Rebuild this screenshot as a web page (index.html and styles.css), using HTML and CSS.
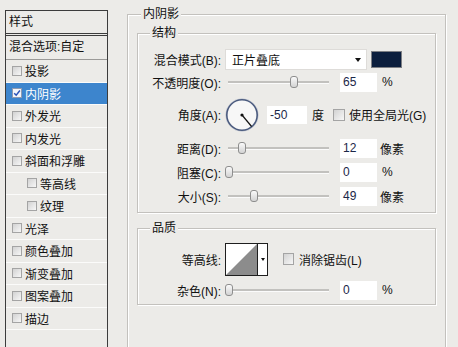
FILE: index.html
```html
<!DOCTYPE html>
<html lang="zh-CN">
<head>
<meta charset="utf-8">
<title>图层样式 - 内阴影</title>
<link rel="stylesheet" href="styles.css">
</head>
<body>
<div class="dialog">
  <div class="styles-list">
    <div class="list-head">样式</div>
    <div class="list-blend">混合选项:自定</div>
    <div class="list-item"><span class="cb"></span>投影</div>
    <div class="list-item selected"><span class="cb checked"><svg viewBox="0 0 10 10" width="8" height="8"><path d="M1.5 5.2 L4 7.8 L8.6 1.8" fill="none" stroke="#2a52b8" stroke-width="1.8"/></svg></span>内阴影</div>
    <div class="list-item"><span class="cb"></span>外发光</div>
    <div class="list-item"><span class="cb"></span>内发光</div>
    <div class="list-item"><span class="cb"></span>斜面和浮雕</div>
    <div class="list-item sub"><span class="cb"></span>等高线</div>
    <div class="list-item sub"><span class="cb"></span>纹理</div>
    <div class="list-item"><span class="cb"></span>光泽</div>
    <div class="list-item"><span class="cb"></span>颜色叠加</div>
    <div class="list-item"><span class="cb"></span>渐变叠加</div>
    <div class="list-item"><span class="cb"></span>图案叠加</div>
    <div class="list-item"><span class="cb"></span>描边</div>
  </div>

  <fieldset class="group outer">
    <legend class="legend-outer">内阴影</legend>

    <fieldset class="group structure">
      <legend class="legend-inner">结构</legend>

      <div class="row row-select">
        <span class="lbl">混合模式(B):</span>
        <div class="select"><span>正片叠底</span><span class="arrow"></span></div>
        <span class="swatch"></span>
      </div>

      <div class="row row-22">
        <span class="lbl">不透明度(O):</span>
        <div class="slider"><span class="thumb" style="margin-left:65px"></span></div>
        <div class="num">65</div>
        <span class="unit pct">%</span>
      </div>

      <div class="row row-dial">
        <span class="lbl">角度(A):</span>
        <svg class="dial" viewBox="0 0 34 36" width="34" height="36">
          <circle cx="17" cy="18" r="16.3" fill="none" stroke="#c9cdd6" stroke-width="1"/>
          <circle cx="17" cy="18" r="15.2" fill="#f7f7f7" stroke="#4a5a7e" stroke-width="1.6"/>
          <line x1="17" y1="18" x2="26.6" y2="29.5" stroke="#111" stroke-width="1.2"/>
          <circle cx="17" cy="18" r="1.6" fill="#111"/>
        </svg>
        <div class="num num-angle">-50</div>
        <span class="unit deg">度</span>
        <span class="cb cb-big cb-global"></span>
        <span class="cb-label">使用全局光(G)</span>
      </div>

      <div class="row">
        <span class="lbl">距离(D):</span>
        <div class="slider"><span class="thumb" style="margin-left:13px"></span></div>
        <div class="num">12</div>
        <span class="unit px">像素</span>
      </div>

      <div class="row">
        <span class="lbl">阻塞(C):</span>
        <div class="slider"><span class="thumb" style="margin-left:0px"></span></div>
        <div class="num">0</div>
        <span class="unit pct">%</span>
      </div>

      <div class="row">
        <span class="lbl">大小(S):</span>
        <div class="slider"><span class="thumb" style="margin-left:25px"></span></div>
        <div class="num">49</div>
        <span class="unit px">像素</span>
      </div>
    </fieldset>

    <fieldset class="group quality">
      <legend class="legend-inner">品质</legend>

      <div class="row row-contour">
        <span class="lbl">等高线:</span>
        <div class="contour">
          <svg class="curve" viewBox="0 0 31 31" width="31" height="31">
            <rect x="0" y="0" width="31" height="31" fill="#fff"/>
            <polygon points="0,31 31,0 31,31" fill="#8c8c8c"/>
          </svg>
          <span class="drop"><span class="arrow small"></span></span>
        </div>
        <span class="cb cb-big cb-aa"></span>
        <span class="cb-label">消除锯齿(L)</span>
      </div>

      <div class="row row-22 row-noise">
        <span class="lbl">杂色(N):</span>
        <div class="slider"><span class="thumb" style="margin-left:0px"></span></div>
        <div class="num">0</div>
        <span class="unit pct">%</span>
      </div>
    </fieldset>
  </fieldset>
</div>
</body>
</html>
```

FILE: styles.css
```css
html, body {
  margin: 0;
  padding: 0;
  background: #ecebe8;
  overflow: hidden;
}

body {
  font-family: "Liberation Sans", "Noto Sans CJK SC", sans-serif;
  font-size: 12px;
  color: #111;
  width: 458px;
  height: 347px;
}

.dialog {
  display: flex;
  align-items: flex-start;
  height: 347px;
  overflow: hidden;
}

/* ---------- left style list ---------- */
.styles-list {
  box-sizing: border-box;
  width: 103px;
  height: 337px;
  margin: 10px 0 0 5px;
  border: 1px solid #3c3c3c;
  border-bottom: none;
  background: #ecebe8;
  flex: none;
}

.list-head {
  height: 22px;
  line-height: 22px;
  padding-left: 3px;
  border-bottom: 3px double #3c3c3c;
}

.list-blend {
  height: 23px;
  line-height: 23px;
  padding-left: 3px;
  border-bottom: 1px solid #9b9a98;
}

.list-item {
  height: 21.5px;
  display: flex;
  align-items: center;
  padding-left: 6px;
  border-bottom: 1px solid #fbfbfa;
}

.list-item.sub {
  padding-left: 21px;
}

.list-item.selected {
  background: #3d85cd;
  color: #fff;
}

.cb {
  box-sizing: border-box;
  width: 10px;
  height: 10px;
  border: 1px solid #a4a4a4;
  background: linear-gradient(135deg, #d2d2d2, #f7f7f7);
  margin-right: 3px;
  flex: none;
  display: flex;
  align-items: center;
  justify-content: center;
}

.cb.checked {
  background: #f4f6fa;
  border-color: #8f9ab0;
}

.cb-big {
  width: 12px;
  height: 12px;
}

/* ---------- group boxes ---------- */
.group {
  margin: 0;
  border: 1px solid #c3c1bd;
  box-shadow: inset 1px 1px 0 #fff, 1px 1px 0 #fff;
  min-width: 0;
}

.outer {
  box-sizing: border-box;
  width: 319px;
  height: 341px;
  margin: 6px 0 0 19px;
  padding: 3px 9px 0;
  border-bottom: none;
  flex: none;
}

.group legend {
  line-height: 16px;
  padding: 0 2px;
  background: #ecebe8;
}

.legend-outer {
  margin-left: 4px;
}

.legend-inner {
  margin-left: 12px;
}

.structure {
  padding: 7px 0 4px;
}

.quality {
  margin-top: 7px;
  padding: 6px 0 3px;
}

/* ---------- rows ---------- */
.row {
  display: flex;
  align-items: center;
  height: 24px;
}

.row-select { height: 23px; }
.row-22 { height: 22px; }
.row-dial { height: 43px; }
.row-contour { height: 34px; }
.row-noise { margin-top: 3px; }

.lbl {
  width: 83px;
  margin-right: 4px;
  text-align: right;
  white-space: nowrap;
  flex: none;
}

.select {
  box-sizing: border-box;
  width: 142px;
  height: 21px;
  background: #fff;
  border: 1px solid #dedcd9;
  display: flex;
  align-items: center;
  justify-content: space-between;
  padding: 0 5px 0 6px;
}

.arrow {
  width: 0;
  height: 0;
  border-left: 3.5px solid transparent;
  border-right: 3.5px solid transparent;
  border-top: 4px solid #111;
}

.arrow.small {
  border-left-width: 2.5px;
  border-right-width: 2.5px;
  border-top-width: 3px;
}

.swatch {
  box-sizing: border-box;
  width: 31px;
  height: 17px;
  margin-left: 4px;
  background: #0c1f3e;
  border: 1px solid #7d7f84;
}

.slider {
  width: 104px;
  height: 13px;
  display: flex;
  align-items: center;
  flex: none;
  background:
    linear-gradient(#fbfbfb, #fbfbfb) 3px 7px / 101px 1px no-repeat,
    linear-gradient(#c2c1be, #c2c1be) 3px 5px / 101px 2px no-repeat;
}

.thumb {
  box-sizing: border-box;
  width: 8px;
  height: 12px;
  border: 1px solid #8e8e8e;
  border-radius: 3px;
  background: linear-gradient(#fafafa, #d3d3d3);
  flex: none;
}

.num {
  box-sizing: border-box;
  width: 37px;
  height: 19px;
  line-height: 19px;
  margin-left: 11px;
  padding-left: 3px;
  background: #fff;
  color: #1b2748;
  flex: none;
}

.num-angle {
  width: 40px;
  height: 18px;
  line-height: 18px;
  margin-left: 8px;
}

.unit.pct { margin-left: 5px; }
.unit.px { margin-left: 3px; }
.unit.deg { margin-left: 5px; }

.dial {
  display: block;
  flex: none;
}

.cb-global { margin-left: 9px; }
.cb-aa { margin-left: 15px; width: 11px; }

.cb-label {
  margin-left: 1px;
  white-space: nowrap;
}

.cb-aa + .cb-label { margin-left: 2px; }

/* ---------- contour picker ---------- */
.contour {
  display: flex;
  height: 33px;
  box-sizing: border-box;
  border: 1px solid #1e1e1e;
  flex: none;
}

.curve {
  display: block;
}

.drop {
  width: 9px;
  background: #fff;
  border-left: 1px solid #1e1e1e;
  display: flex;
  align-items: center;
  justify-content: center;
}
```
